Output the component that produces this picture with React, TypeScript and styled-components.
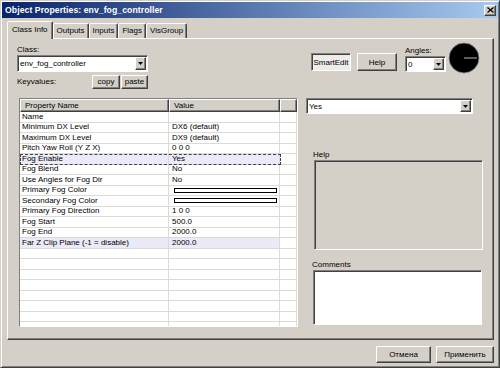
import React from 'react';
import styled, { createGlobalStyle, css } from 'styled-components';

const GlobalStyle = createGlobalStyle`
  html, body {
    margin: 0;
    padding: 0;
    background: #d4d0c8;
  }
  * {
    box-sizing: border-box;
  }
`;

const FONT = `"Liberation Sans", Arial, sans-serif`;

const raised = css`
  border: 1px solid;
  border-color: #ffffff #404040 #404040 #ffffff;
  box-shadow: inset -1px -1px 0 #808080;
`;

const sunken = css`
  border: 1px solid;
  border-color: #808080 #ffffff #ffffff #808080;
  box-shadow: inset 1px 1px 0 #404040;
`;

const Window = styled.div`
  width: 500px;
  height: 368px;
  background: #d4d0c8;
  border: 1px solid;
  border-color: #d4d0c8 #404040 #404040 #d4d0c8;
  box-shadow: inset 1px 1px 0 #ffffff, inset -1px -1px 0 #808080;
  padding: 1px;
  display: flex;
  flex-direction: column;
  font-family: ${FONT};
  font-size: 8px;
  color: #000;
  overflow: hidden;
`;

const TitleBar = styled.div`
  height: 16px;
  flex: none;
  display: flex;
  align-items: center;
  justify-content: space-between;
  padding: 0 1px 0 3px;
  background: linear-gradient(to right, #0a246a, #a6caf0);
`;

const Title = styled.div`
  color: #fff;
  font-weight: bold;
  font-size: 8.7px;
  letter-spacing: 0.05px;
`;

const CloseButton = styled.div`
  ${raised};
  width: 12px;
  height: 11px;
  background: #d4d0c8;
  display: flex;
  align-items: center;
  justify-content: center;
  margin-right: 1px;
`;

const TabStrip = styled.div`
  display: flex;
  align-items: flex-end;
  margin-top: 2px;
  padding-left: 5px;
  height: 18px;
  flex: none;
  position: relative;
  z-index: 1;
`;

const Tab = styled.div<{ active?: boolean }>`
  height: ${({ active }) => (active ? '18px' : '15px')};
  padding: ${({ active }) => (active ? '3px 4px 0 4px' : '2px 3px 0 3px')};
  margin-bottom: ${({ active }) => (active ? '-1px' : '0')};
  border: 1px solid;
  border-bottom: none;
  border-color: #ffffff #404040 transparent #ffffff;
  box-shadow: inset -1px 0 0 #808080;
  border-radius: 2px 2px 0 0;
  background: #d4d0c8;
  font-size: 8px;
  white-space: nowrap;
`;

const Panel = styled.div`
  margin: 0 4px 0 5px;
  height: 302px;
  flex: none;
  border: 1px solid;
  border-color: #ffffff #404040 #404040 #ffffff;
  box-shadow: inset -1px -1px 0 #808080;
  padding: 5px 10px 0 9px;
  display: grid;
  grid-template-columns: 281px 177px;
  grid-template-rows: 54px 229px;
  column-gap: 8px;
`;

const LeftTop = styled.div`
  display: flex;
  flex-direction: column;
`;

const Label = styled.div<{ indent?: number }>`
  height: 11px;
  line-height: 11px;
  padding-left: ${({ indent }) => indent ?? 0}px;
  white-space: nowrap;
`;

const Combo = styled.div<{ w: number; h?: number }>`
  ${sunken};
  width: ${({ w }) => w}px;
  height: ${({ h }) => h ?? 17}px;
  background: #fff;
  display: flex;
  align-items: stretch;
  padding: 1px;
`;

const ComboText = styled.div`
  flex: 1;
  padding-left: 1px;
  display: flex;
  align-items: center;
  font-size: 8px;
`;

const ComboArrow = styled.div`
  ${raised};
  width: 11px;
  background: #d4d0c8;
  display: flex;
  align-items: center;
  justify-content: center;
`;

const KeyRow = styled.div`
  display: flex;
  align-items: center;
  height: 15px;
  margin-top: 2px;
`;

const SmallButton = styled.div<{ w: number }>`
  ${raised};
  width: ${({ w }) => w}px;
  height: 14px;
  background: #d4d0c8;
  display: flex;
  align-items: center;
  justify-content: center;
  font-size: 8px;
  margin-right: 1px;
`;

const RightTop = styled.div`
  display: flex;
  align-items: flex-start;
  padding-left: 5px;
`;

const Button = styled.div<{ w: number; pressed?: boolean }>`
  ${({ pressed }) => (pressed ? sunken : raised)};
  width: ${({ w }) => w}px;
  height: 18px;
  margin-top: 9px;
  margin-right: 6px;
  background: ${({ pressed }) => (pressed ? '#eeece8' : '#d4d0c8')};
  display: flex;
  align-items: center;
  justify-content: center;
  font-size: 8px;
`;

const AngleBox = styled.div`
  display: flex;
  flex-direction: column;
  margin-left: 2px;
  margin-top: 1px;
`;

const Dial = styled.svg`
  margin-left: 2px;
  margin-top: -2px;
`;

const Table = styled.div`
  ${sunken};
  margin-left: 2px;
  height: 229px;
  background: #fff;
  overflow: hidden;
  display: flex;
  flex-direction: column;
`;

const Grid = styled.div`
  display: grid;
  grid-template-columns: 149px 111px 17px;
`;

const HeadCell = styled.div`
  ${raised};
  height: 13px;
  background: #d4d0c8;
  padding-left: 4px;
  display: flex;
  align-items: center;
  font-size: 8px;
`;

const Row = styled.div<{ tint?: boolean; focus?: boolean }>`
  display: grid;
  grid-template-columns: 149px 111px 17px;
  height: 10.5px;
  flex: none;
  background: ${({ tint }) => (tint ? '#eaeaf8' : '#fff')};
  position: relative;
  ${({ focus }) =>
    focus &&
    css`
      &::after {
        content: '';
        position: absolute;
        left: 0;
        top: 0;
        width: 261px;
        height: 100%;
        border: 1px dashed #404040;
        box-sizing: border-box;
      }
    `}
`;

const Cell = styled.div<{ first?: boolean; plain?: boolean }>`
  border-bottom: 1px solid #dcdad4;
  border-right: 1px solid #dcdad4;
  padding-left: ${({ first }) => (first ? '2px' : '3px')};
  line-height: 10px;
  font-size: 8px;
  white-space: nowrap;
  overflow: hidden;
  background: ${({ plain }) => (plain ? '#fff' : 'transparent')};
  display: flex;
  align-items: center;
`;

const Swatch = styled.div`
  width: 103px;
  height: 5px;
  border: 1px solid #000;
  background: #fff;
  margin-left: 2px;
`;

const RightBottom = styled.div`
  display: flex;
  flex-direction: column;
`;

const HelpBox = styled.div`
  ${sunken};
  width: 169px;
  height: 90px;
  margin-left: 8px;
  background: #d4d0c8;
`;

const CommentsBox = styled.div`
  ${sunken};
  width: 169px;
  height: 55px;
  margin-left: 7px;
  background: #fff;
`;

const Footer = styled.div`
  flex: 1;
  display: flex;
  justify-content: flex-end;
  align-items: flex-start;
  padding: 6px 4px 0 0;
  gap: 5px;
`;

const DialogButton = styled.div<{ w: number }>`
  ${raised};
  width: ${({ w }) => w}px;
  height: 17px;
  background: #d4d0c8;
  display: flex;
  align-items: center;
  justify-content: center;
  font-size: 8px;
`;

const Arrow = () => (
  <svg width="5" height="3" viewBox="0 0 5 3">
    <path d="M0 0h5L2.5 3z" fill="#000" />
  </svg>
);

const rows: { name: string; value?: string; swatch?: boolean; tint?: boolean; focus?: boolean }[] = [
  { name: 'Name', value: '' },
  { name: 'Minimum DX Level', value: 'DX6 (default)' },
  { name: 'Maximum DX Level', value: 'DX9 (default)' },
  { name: 'Pitch Yaw Roll (Y Z X)', value: '0 0 0' },
  { name: 'Fog Enable', value: 'Yes', tint: true, focus: true },
  { name: 'Fog Blend', value: 'No' },
  { name: 'Use Angles for Fog Dir', value: 'No' },
  { name: 'Primary Fog Color', swatch: true },
  { name: 'Secondary Fog Color', swatch: true },
  { name: 'Primary Fog Direction', value: '1 0 0' },
  { name: 'Fog Start', value: '500.0' },
  { name: 'Fog End', value: '2000.0' },
  { name: 'Far Z Clip Plane (-1 = disable)', value: '2000.0', tint: true },
];

const tabs = ['Class Info', 'Outputs', 'Inputs', 'Flags', 'VisGroup'];

const App: React.FC = () => {
  const empty = Array.from({ length: 9 });
  return (
    <>
      <GlobalStyle />
      <Window>
        <TitleBar>
          <Title>Object Properties: env_fog_controller</Title>
          <CloseButton>
            <svg width="7" height="6" viewBox="0 0 7 6">
              <path d="M0.5 0.5l6 5M6.5 0.5l-6 5" stroke="#000" strokeWidth="1.3" />
            </svg>
          </CloseButton>
        </TitleBar>

        <TabStrip>
          {tabs.map((t, i) => (
            <Tab key={t} active={i === 0}>{t}</Tab>
          ))}
        </TabStrip>

        <Panel>
          <LeftTop>
            <Label>Class:</Label>
            <Combo w={131}>
              <ComboText>env_fog_controller</ComboText>
              <ComboArrow><Arrow /></ComboArrow>
            </Combo>
            <KeyRow>
              <Label style={{ width: 75 }}>Keyvalues:</Label>
              <SmallButton w={28}>copy</SmallButton>
              <SmallButton w={27}>paste</SmallButton>
            </KeyRow>
          </LeftTop>

          <RightTop>
            <Button w={40} pressed>SmartEdit</Button>
            <Button w={40}>Help</Button>
            <AngleBox>
              <Label>Angles:</Label>
              <Combo w={41} h={16}>
                <ComboText>0</ComboText>
                <ComboArrow><Arrow /></ComboArrow>
              </Combo>
            </AngleBox>
            <Dial width="32" height="32" viewBox="0 0 32 32">
              <circle cx="16" cy="16" r="15" fill="#000" stroke="#8a8a8a" strokeWidth="0.8" />
              <line x1="16" y1="16" x2="29" y2="16" stroke="#9a9a9a" strokeWidth="1.2" />
            </Dial>
          </RightTop>

          <Table>
            <Grid>
              <HeadCell>Property Name</HeadCell>
              <HeadCell>Value</HeadCell>
              <HeadCell />
            </Grid>
            {rows.map((r) => (
              <Row key={r.name} tint={r.tint} focus={r.focus}>
                <Cell first>{r.name}</Cell>
                <Cell>{r.swatch ? <Swatch /> : r.value}</Cell>
                <Cell plain />
              </Row>
            ))}
            {empty.map((_, i) => (
              <Row key={i}>
                <Cell first />
                <Cell />
                <Cell plain />
              </Row>
            ))}
          </Table>

          <RightBottom>
            <Combo w={167} h={16}>
              <ComboText>Yes</ComboText>
              <ComboArrow><Arrow /></ComboArrow>
            </Combo>
            <Label indent={7} style={{ marginTop: 35 }}>Help</Label>
            <HelpBox />
            <Label indent={6} style={{ marginTop: 9 }}>Comments</Label>
            <CommentsBox />
          </RightBottom>
        </Panel>

        <Footer>
          <DialogButton w={55}>Отмена</DialogButton>
          <DialogButton w={58}>Применить</DialogButton>
        </Footer>
      </Window>
    </>
  );
};

export default App;
